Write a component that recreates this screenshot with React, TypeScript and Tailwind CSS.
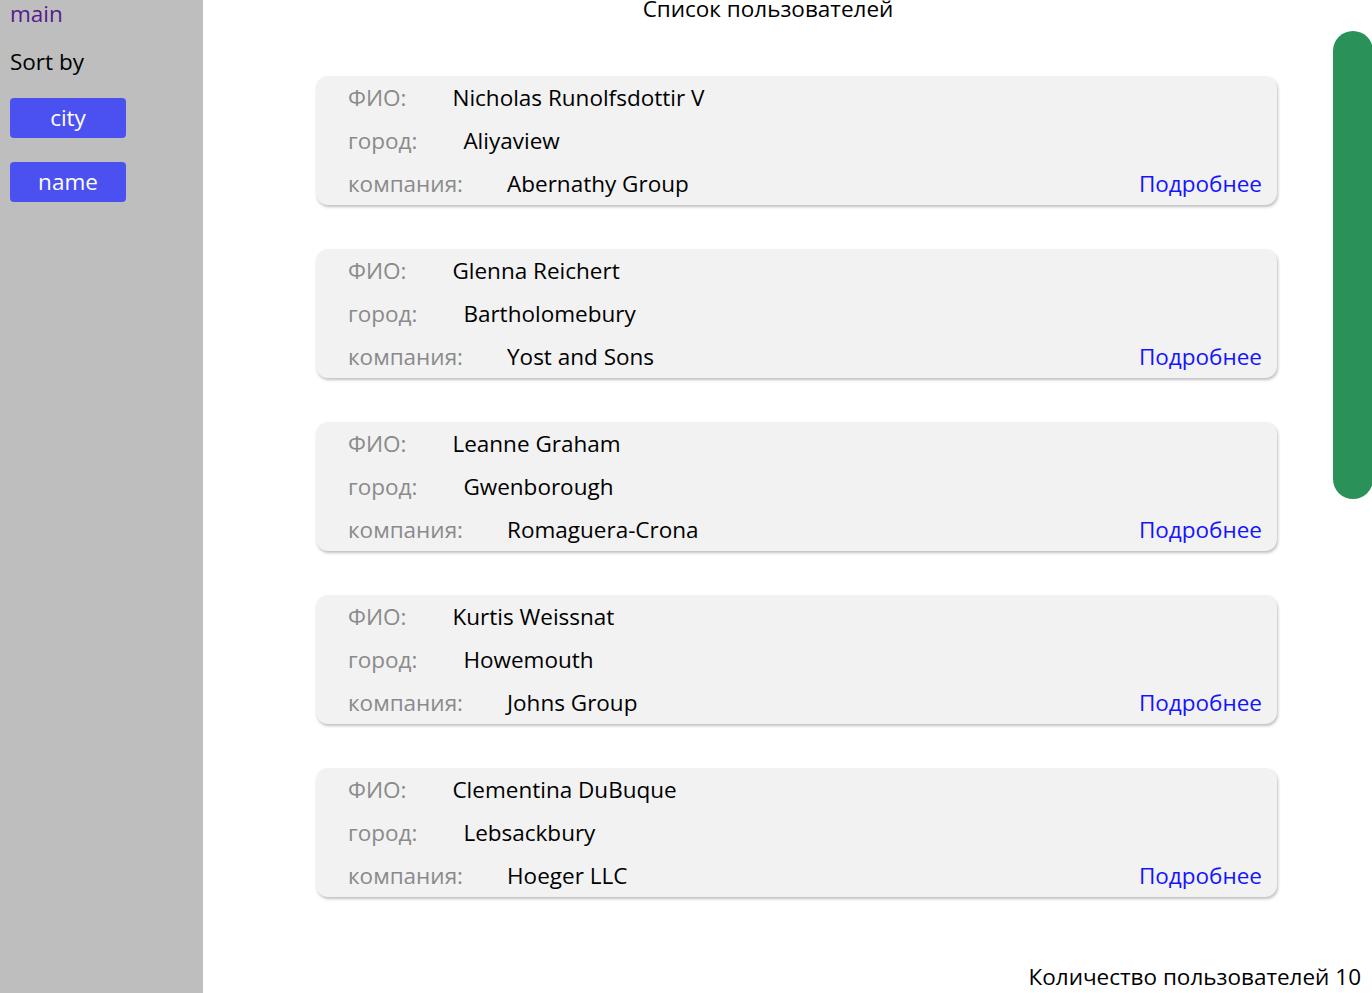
const users = [
  { name: 'Nicholas Runolfsdottir V', city: 'Aliyaview', company: 'Abernathy Group' },
  { name: 'Glenna Reichert', city: 'Bartholomebury', company: 'Yost and Sons' },
  { name: 'Leanne Graham', city: 'Gwenborough', company: 'Romaguera-Crona' },
  { name: 'Kurtis Weissnat', city: 'Howemouth', company: 'Johns Group' },
  { name: 'Clementina DuBuque', city: 'Lebsackbury', company: 'Hoeger LLC' },
];

function UserCard({ name, city, company }: { name: string; city: string; company: string }) {
  return (
    <div className="bg-[#f2f2f2] rounded-[12px] shadow-[1px_2px_3px_rgba(0,0,0,0.25)] pl-[32px] pr-[15px]">
      <div className="h-[43px] flex items-center">
        <span className="text-[#8a8a8a] mr-[46px]">ФИО:</span>
        <span>{name}</span>
      </div>
      <div className="h-[43px] flex items-center">
        <span className="text-[#8a8a8a] mr-[46px]">город:</span>
        <span>{city}</span>
      </div>
      <div className="h-[43px] flex items-center">
        <span className="text-[#8a8a8a] mr-[44px]">компания:</span>
        <span>{company}</span>
        <a href="#" className="ml-auto text-[#1414ff]">Подробнее</a>
      </div>
    </div>
  );
}

export default function App() {
  return (
    <div className="flex h-[993px] overflow-hidden bg-white text-black text-[22.5px] font-['Segoe_UI','Open_Sans',sans-serif]">
      {/* Sidebar */}
      <aside className="w-[203px] shrink-0 bg-[#bebebe] px-[10px] flex flex-col items-start">
        <a href="#" className="leading-[30px] -mt-[1px] text-[#551a8b]">main</a>
        <div className="leading-[30px] mt-[18px]">Sort by</div>
        <button className="mt-[21px] w-[116px] h-[40px] rounded-[4px] bg-[#4b50f0] text-white">city</button>
        <button className="mt-[24px] w-[116px] h-[40px] rounded-[4px] bg-[#4b50f0] text-white">name</button>
      </aside>

      {/* Main */}
      <main className="flex-1 flex flex-col">
        <h1 className="leading-[30px] -mt-[6px] text-center pr-[40px]">Список пользователей</h1>
        <div className="flex items-start mt-[7px]">
          <div className="ml-[113px] w-[961px] pt-[45px] flex flex-col gap-[44px]">
            {users.map((u, i) => (
              <UserCard key={i} {...u} />
            ))}
          </div>
          <div className="ml-[56px] w-[40px] h-[468px] shrink-0 rounded-full bg-[#2a9158]" />
        </div>
        <div className="mt-auto mb-[1px] leading-[30px] text-right pr-[12px]">Количество пользователей 10</div>
      </main>
    </div>
  );
}
